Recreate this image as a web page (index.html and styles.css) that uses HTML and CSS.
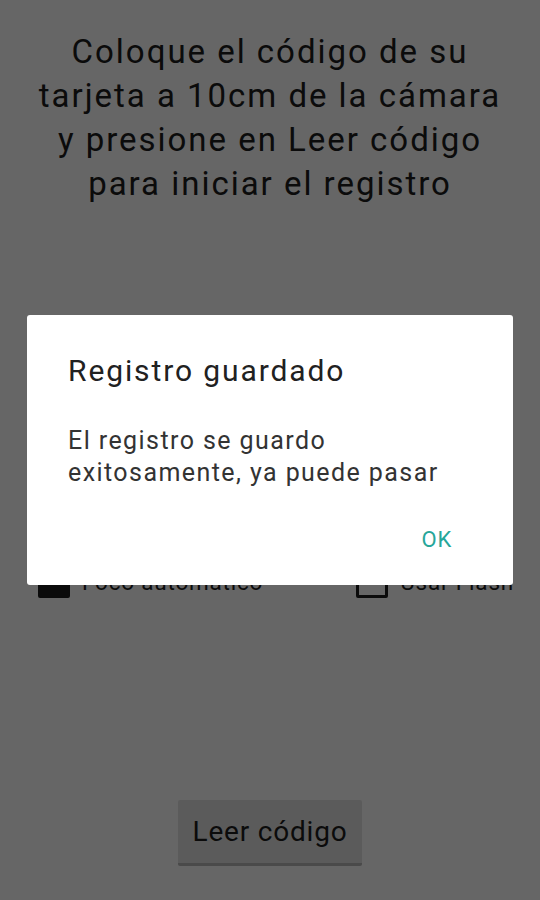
FILE: index.html
```html
<html>
<head>
	<meta charset="utf-8">
	<link rel="stylesheet" href="styles.css">
</head>
<body>
	<div class="screen">
		<p class="hint">Coloque el código de su<br>tarjeta a 10cm de la cámara<br>y presione en Leer código<br>para iniciar el registro</p>

		<div class="options">
			<label class="check checked"><span class="box"></span>Foco automático</label>
			<label class="check"><span class="box"></span>Usar Flash</label>
		</div>

		<div class="actions">
			<button type="button" class="read">Leer código</button>
		</div>
	</div>

	<!-- dimmed backdrop and alert dialog -->
	<div class="scrim">
		<div class="dialog" role="alertdialog" aria-labelledby="dlgTitle">
			<h2 id="dlgTitle" class="dialog-title">Registro guardado</h2>
			<p class="dialog-text">El registro se guardo<br>exitosamente, ya puede pasar</p>
			<div class="dialog-buttons">
				<button type="button" class="flat">OK</button>
			</div>
		</div>
	</div>
</body>
</html>
```

FILE: styles.css
```css
html, body {
	margin: 0;
	height: 100%;
}
body {
	font-family: Roboto, "Noto Sans", sans-serif;
	letter-spacing: 0.05em;
	background: #fff;
	color: #1c1c1c;
}

.screen {
	height: 900px;
	display: flex;
	flex-direction: column;
	box-sizing: border-box;
	padding: 30px 0 34px;
}

.hint {
	margin: 0;
	font-size: 33px;
	line-height: 44px;
	letter-spacing: 0.06em;
	text-align: center;
}

/* checkbox row */
.options {
	display: flex;
	justify-content: space-between;
	margin: 360px 26px 0 38px;
}
.check {
	display: flex;
	align-items: center;
	gap: 12px;
	font-size: 22.5px;
}
.box {
	width: 26px;
	height: 26px;
	border: 3px solid #1c1c1c;
	border-radius: 2px;
}
.checked .box {
	background: #1c1c1c;
}

.actions {
	margin-top: auto;
	display: flex;
	justify-content: center;
}
.read {
	font-family: inherit;
	letter-spacing: inherit;
	font-size: 28px;
	color: #1c1c1c;
	background: #e4e4e4;
	border: none;
	border-bottom: 3px solid #b8b8b8;
	border-radius: 2px;
	width: 184px;
	height: 66px;
	padding: 0;
}

/* overlay */
.scrim {
	position: fixed;
	inset: 0;
	background: rgba(0, 0, 0, 0.6);
}
.dialog {
	position: absolute;
	left: 27px;
	top: 315px;
	width: 486px;
	height: 270px;
	box-sizing: border-box;
	background: #fff;
	border-radius: 3px;
	padding: 36px 41px 0;
}
.dialog-title {
	margin: 0;
	font-weight: normal;
	font-size: 30px;
	line-height: 40px;
	letter-spacing: 0.063em;
	color: #212121;
}
.dialog-text {
	margin: 34px 0 0;
	font-size: 25px;
	line-height: 32px;
	letter-spacing: 0.057em;
	color: #333;
}
.dialog-buttons {
	display: flex;
	justify-content: flex-end;
	margin-top: 32px;
}
.flat {
	font-family: inherit;
	letter-spacing: inherit;
	font-size: 22px;
	color: #26a69a;
	background: none;
	border: none;
	padding: 6px 20px;
}
```
